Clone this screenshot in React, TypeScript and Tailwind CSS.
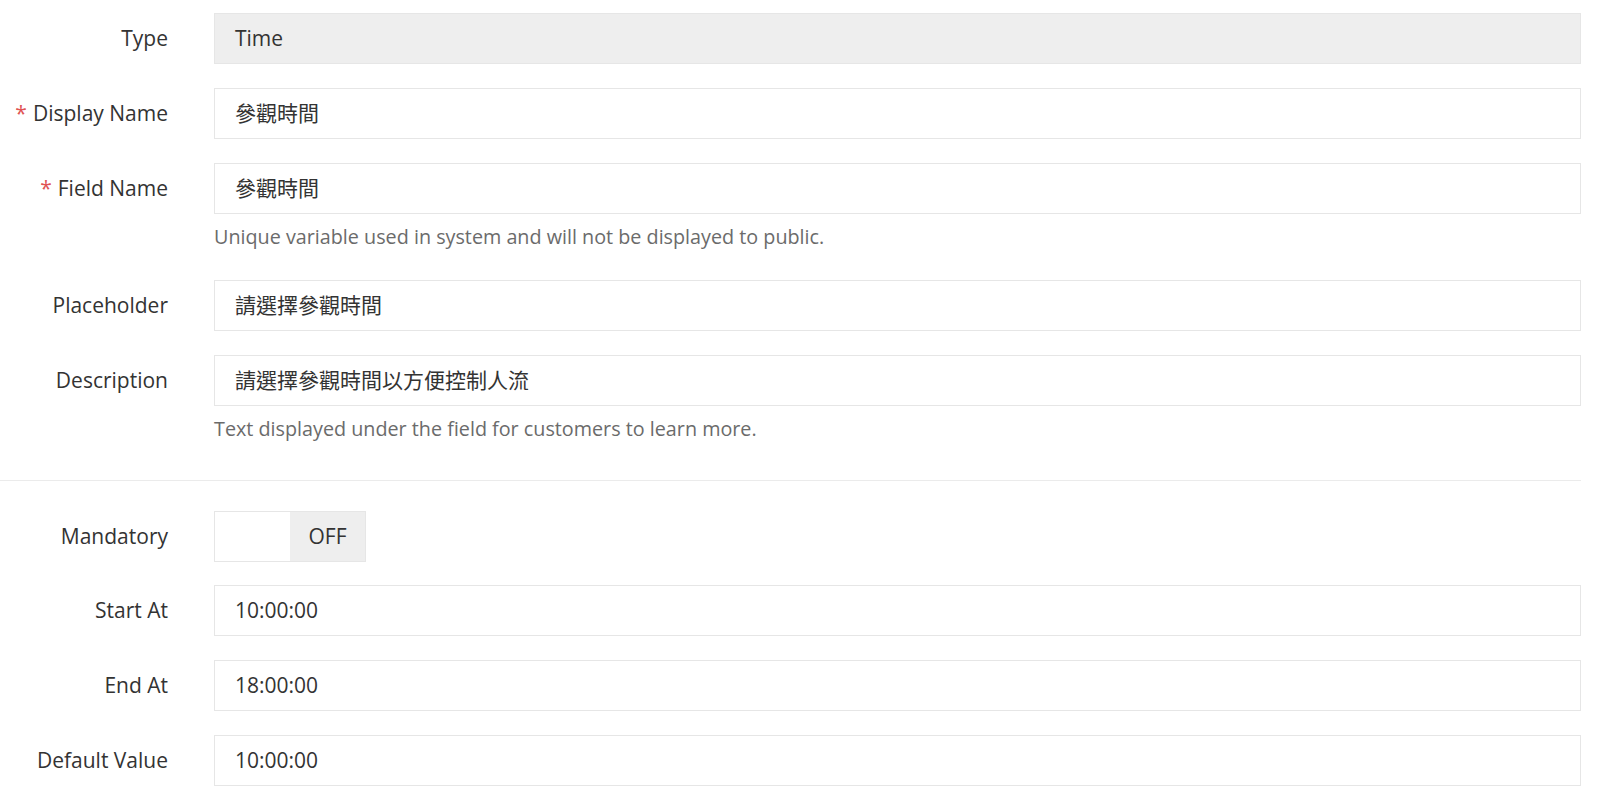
const font = { fontFamily: '"Open Sans", "Noto Sans CJK TC", sans-serif' };

type Row = {
  label: string;
  value: string;
  required?: boolean;
  readOnly?: boolean;
  help?: string;
};

const topRows: Row[] = [
  { label: "Type", value: "Time", readOnly: true },
  { label: "Display Name", value: "參觀時間", required: true },
  {
    label: "Field Name",
    value: "參觀時間",
    required: true,
    help: "Unique variable used in system and will not be displayed to public.",
  },
  { label: "Placeholder", value: "請選擇參觀時間" },
  {
    label: "Description",
    value: "請選擇參觀時間以方便控制人流",
    help: "Text displayed under the field for customers to learn more.",
  },
];

const timeRows: Row[] = [
  { label: "Start At", value: "10:00:00" },
  { label: "End At", value: "18:00:00" },
  { label: "Default Value", value: "10:00:00" },
];

function Label({ text, required }: { text: string; required?: boolean }) {
  return (
    <div className="w-[168px] shrink-0 h-[51px] flex items-center justify-end text-[21px] text-[#333]">
      {required && <span className="text-[#e05353] mr-[6px]">*</span>}
      {text}
    </div>
  );
}

function FieldRow({ row }: { row: Row }) {
  return (
    <div className="flex gap-[46px] mb-[24px]">
      <Label text={row.label} required={row.required} />
      <div className="flex-1">
        <div
          className={`h-[51px] border border-[#e6e6e6] flex items-center pl-[20px] text-[21px] text-[#333] ${
            row.readOnly ? "bg-[#eeeeee]" : "bg-white"
          }`}
        >
          {row.value}
        </div>
        {row.help && (
          <p className="mt-[10px] mb-[7px] text-[19.75px] leading-[25px] text-[#6b6b6b]">{row.help}</p>
        )}
      </div>
    </div>
  );
}

export default function App() {
  return (
    <div className="min-h-[796px] bg-white pt-[13px]" style={font}>
      <div className="pr-[19px]">
        {topRows.map((r) => (
          <FieldRow key={r.label} row={r} />
        ))}
      </div>

      <div className="mr-[19px] mt-[32px] border-t border-[#ebebeb]" />

      <div className="pr-[19px] pt-[30px]">
        <div className="flex gap-[46px] mb-[23px]">
          <Label text="Mandatory" />
          <div className="flex h-[51px] w-[152px] border border-[#e6e6e6]">
            <div className="w-[75px] bg-white" />
            <div className="flex-1 bg-[#eeeeee] flex items-center justify-center text-[21px] text-[#333]">
              OFF
            </div>
          </div>
        </div>
        {timeRows.map((r) => (
          <FieldRow key={r.label} row={r} />
        ))}
      </div>
    </div>
  );
}
